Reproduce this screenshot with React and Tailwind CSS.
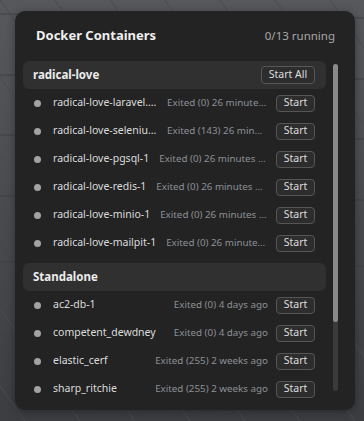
import React from "react";

const groups = [
  {
    name: "radical-love",
    action: "Start All",
    items: [
      ["radical-love-laravel.test-1", "Exited (0) 26 minutes ago"],
      ["radical-love-selenium-1", "Exited (143) 26 minutes ago"],
      ["radical-love-pgsql-1", "Exited (0) 26 minutes ago"],
      ["radical-love-redis-1", "Exited (0) 26 minutes ago"],
      ["radical-love-minio-1", "Exited (0) 26 minutes ago"],
      ["radical-love-mailpit-1", "Exited (0) 26 minutes ago"],
    ],
  },
  {
    name: "Standalone",
    items: [
      ["ac2-db-1", "Exited (0) 4 days ago"],
      ["competent_dewdney", "Exited (0) 4 days ago"],
      ["elastic_cerf", "Exited (255) 2 weeks ago"],
      ["sharp_ritchie", "Exited (255) 2 weeks ago"],
      ["eager_hopper", "Exited (0) 3 weeks ago"],
    ],
  },
];

function Backdrop() {
  const diag = [];
  for (let i = -8; i < 10; i++) {
    const x = i * 55;
    diag.push(<line key={"d" + i} x1={x} y1={0} x2={x + 300} y2={421} />);
  }
  const horiz = [14, 75, 135, 196, 262, 335, 410];
  return (
    <svg className="absolute inset-0 h-full w-full" viewBox="0 0 364 421" preserveAspectRatio="none">
      <defs>
        <linearGradient id="bg" x1="0" y1="0" x2="0" y2="1">
          <stop offset="0" stopColor="#56585c" />
          <stop offset="1" stopColor="#3b3d41" />
        </linearGradient>
      </defs>
      <rect width="364" height="421" fill="url(#bg)" />
      <g stroke="#4a4c50" strokeWidth="1">
        {diag}
      </g>
      <g stroke="#3f4145" strokeWidth="1">
        {horiz.map((y) => (
          <line key={y} x1={0} y1={y} x2={364} y2={y + 4} />
        ))}
      </g>
    </svg>
  );
}

function Row({ name, status }) {
  return (
    <div className="flex h-[28px] items-center pl-[11px] pr-[11px]">
      <span className="h-[7px] w-[7px] shrink-0 rounded-full bg-[#a3a3a3]" />
      <span className="ml-[12px] max-w-[104px] shrink-0 truncate text-[10.5px] text-[#dcdcdc]">{name}</span>
      <span className="ml-[10px] min-w-0 flex-1 truncate text-right text-[9.8px] text-[#8c9096]">{status}</span>
      <button className="ml-[8px] flex h-[17px] w-[39px] shrink-0 items-center justify-center rounded-[4px] border border-[#555555] bg-[#2d2d2d] text-[10.5px] text-[#dedede]">
        Start
      </button>
    </div>
  );
}

export default function App() {
  return (
    <div
      className="relative h-[421px] w-[364px] overflow-hidden"
      style={{ fontFamily: '"Noto Sans", "Open Sans", sans-serif' }}
    >
      <Backdrop />
      <div className="relative ml-[15px] mt-[11px] flex h-[399px] w-[340px] flex-col rounded-[10px] bg-[#232323] shadow-[0_2px_8px_rgba(0,0,0,0.35)]">
        <div className="flex h-[50px] items-center justify-between pl-[21px] pr-[20px]">
          <span className="text-[13px] font-bold text-[#f0f0f0]">Docker Containers</span>
          <span className="text-[11.5px] text-[#a8a8a8]">0/13 running</span>
        </div>
        <div className="flex min-h-0 flex-1 pb-[10px]">
          <div className="ml-[8px] min-w-0 flex-1 overflow-hidden">
            {groups.map((g, gi) => (
              <div key={g.name} className={gi > 0 ? "mt-[6px]" : ""}>
                <div className="flex h-[28px] items-center justify-between rounded-[6px] bg-[#303030] pl-[10px] pr-[11px]">
                  <span className="text-[11.5px] font-bold text-[#ececec]">{g.name}</span>
                  {g.action && (
                    <button className="flex h-[18px] w-[54px] items-center justify-center rounded-[4px] border border-[#585858] bg-[#2d2d2d] text-[10.5px] text-[#dedede]">
                      {g.action}
                    </button>
                  )}
                </div>
                {g.items.map(([n, s]) => (
                  <Row key={n} name={n} status={s} />
                ))}
              </div>
            ))}
          </div>
          <div className="ml-[7px] mr-[17px] mt-[3px] mb-[9px] flex w-[5px] flex-col rounded-full bg-[#3a3a3a]">
            <div className="h-[258px] w-[5px] rounded-full bg-[#8a8a8a]" />
          </div>
        </div>
      </div>
    </div>
  );
}
